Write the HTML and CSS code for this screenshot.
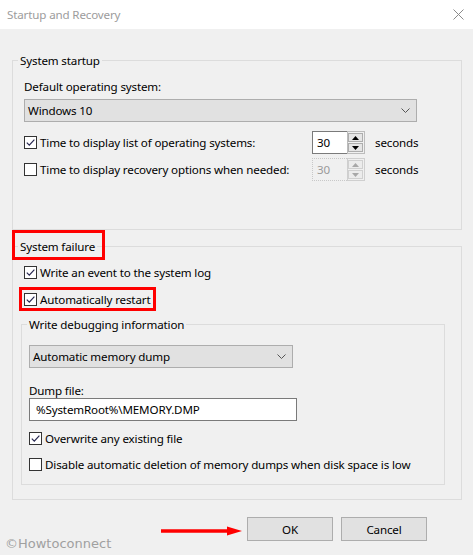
FILE: index.html
```html
<!DOCTYPE html>
<html>
<head>
<meta charset="utf-8">
<link rel="stylesheet" href="styles.css">
</head>
<body>
<div class="titlebar">
  <span class="title">Startup and Recovery</span>
  <svg class="close" viewBox="0 0 11 11" width="11" height="11"><path d="M0.5 0.5 L10.5 10.5 M10.5 0.5 L0.5 10.5" stroke="#8a8a8a" stroke-width="1" fill="none"/></svg>
</div>
<div class="main">
  <fieldset class="group g-startup">
    <legend>System startup</legend>
    <div class="startup-content">
      <div class="label">Default operating system:</div>
      <div class="combo combo-os"><span>Windows 10</span><svg class="chev" viewBox="0 0 9 5" width="9" height="5"><path d="M0.5 0.5 L4.5 4.5 L8.5 0.5" stroke="#555" fill="none"/></svg></div>
      <div class="time-row row-1">
        <div class="check"><span class="box"><svg viewBox="0 0 11 11" width="11" height="11"><path d="M1.8 5.6 L4.3 8.2 L9.4 2.6" stroke="#262650" stroke-width="1.2" fill="none"/></svg></span><span>Time to display list of operating systems:</span></div>
        <div class="spin">
          <div class="spin-text">30</div>
          <div class="spin-btns">
            <div class="sbtn"><svg viewBox="0 0 7 4" width="7" height="4"><path d="M0 4 L3.5 0 L7 4Z" fill="#000"/></svg></div>
            <div class="sbtn"><svg viewBox="0 0 7 4" width="7" height="4"><path d="M0 0 L3.5 4 L7 0Z" fill="#000"/></svg></div>
          </div>
        </div>
        <span class="unit">seconds</span>
      </div>
      <div class="time-row row-2">
        <div class="check"><span class="box"></span><span>Time to display recovery options when needed:</span></div>
        <div class="spin disabled">
          <div class="spin-text">30</div>
          <div class="spin-btns">
            <div class="sbtn"><svg viewBox="0 0 7 4" width="7" height="4"><path d="M0 4 L3.5 0 L7 4Z" fill="#a8a8a8"/></svg></div>
            <div class="sbtn"><svg viewBox="0 0 7 4" width="7" height="4"><path d="M0 0 L3.5 4 L7 0Z" fill="#a8a8a8"/></svg></div>
          </div>
        </div>
        <span class="unit">seconds</span>
      </div>
    </div>
  </fieldset>

  <fieldset class="group g-failure">
    <legend class="legend-marked">System failure<span class="mark mark-legend"></span></legend>
    <div class="failure-content">
      <div class="check check-row"><span class="box"><svg viewBox="0 0 11 11" width="11" height="11"><path d="M1.8 5.6 L4.3 8.2 L9.4 2.6" stroke="#262650" stroke-width="1.2" fill="none"/></svg></span><span>Write an event to the system log</span></div>
      <div class="check check-row row-restart"><span class="box"><svg viewBox="0 0 11 11" width="11" height="11"><path d="M1.8 5.6 L4.3 8.2 L9.4 2.6" stroke="#262650" stroke-width="1.2" fill="none"/></svg></span><span>Automatically restart</span><span class="mark mark-restart"></span></div>

      <fieldset class="group g-debug">
        <legend>Write debugging information</legend>
        <div class="debug-content">
          <div class="combo combo-dump"><span>Automatic memory dump</span><svg class="chev" viewBox="0 0 9 5" width="9" height="5"><path d="M0.5 0.5 L4.5 4.5 L8.5 0.5" stroke="#555" fill="none"/></svg></div>
          <div class="label dump-label">Dump file:</div>
          <div class="textfield">%SystemRoot%\MEMORY.DMP</div>
          <div class="check check-row debug-row row-overwrite"><span class="box"><svg viewBox="0 0 11 11" width="11" height="11"><path d="M1.8 5.6 L4.3 8.2 L9.4 2.6" stroke="#262650" stroke-width="1.2" fill="none"/></svg></span><span>Overwrite any existing file</span></div>
          <div class="check check-row debug-row row-disable"><span class="box"></span><span>Disable automatic deletion of memory dumps when disk space is low</span></div>
        </div>
      </fieldset>
    </div>
  </fieldset>

  <div class="footer">
    <svg class="arrow" viewBox="0 0 81 24" width="81" height="24"><path d="M0 14 L67 14" stroke="#f00" stroke-width="3.5" fill="none"/><path d="M66 9.5 L81 14 L66 18.5Z" fill="#f00"/></svg>
    <div class="btn">OK</div>
    <div class="btn btn-cancel">Cancel</div>
  </div>
</div>
<div class="watermark">©Howtoconnect</div>
</body>
</html>
```

FILE: styles.css
```css
* { box-sizing: border-box; }

body {
  margin: 0;
  width: 473px;
  height: 555px;
  overflow: hidden;
  position: relative;
  background: #f0f0f0;
  font-family: "Noto Sans", "Liberation Sans", sans-serif;
  font-size: 11.6px;
  letter-spacing: -0.15px;
  line-height: 15px;
  color: #000;
}

.titlebar {
  height: 29px;
  background: #fff;
  display: flex;
  align-items: center;
  justify-content: space-between;
  padding: 0 9px 0 7px;
}

.title { color: #9c9c9c; }

.close { display: block; }

.main { padding: 24px 11px 0 12px; }

.group {
  margin: 0;
  padding: 0;
  min-width: 0;
  border: 1px solid #dcdcdc;
}

.group legend {
  margin-left: 5px;
  padding: 0 2px;
  line-height: 15px;
}

.startup-content { padding: 11px 0 48px 11px; }

.combo {
  display: flex;
  align-items: center;
  justify-content: space-between;
  height: 23px;
  background: #e1e1e1;
  border: 1px solid #adadad;
  padding: 0 6px 0 3px;
}

.chev { display: block; }

.combo-os { margin-top: 5px; width: 393px; }

.time-row {
  display: flex;
  align-items: center;
  height: 23px;
}

.row-1 { margin-top: 9px; }
.row-2 { margin-top: 4px; }

.check {
  display: flex;
  align-items: center;
  gap: 3px;
}

.time-row .check { width: 288px; }

.box {
  flex: none;
  width: 13px;
  height: 13px;
  border: 1px solid #333;
  background: #fff;
  display: flex;
}

.box svg { display: block; }

.spin {
  width: 53px;
  height: 23px;
  display: flex;
}

.spin-text {
  flex: 1;
  background: #fff;
  border: 1px solid #7a7a7a;
  border-right: none;
  padding-left: 4px;
  display: flex;
  align-items: center;
}

.spin-btns {
  width: 18px;
  border: 1px solid #bcbcbc;
  background: #f0f0f0;
  padding: 1px 1px 1px 0;
  display: flex;
  flex-direction: column;
  gap: 1px;
}

.sbtn {
  flex: 1;
  background: #e5e5e5;
  border: 1px solid #adadad;
  display: flex;
  align-items: center;
  justify-content: center;
}

.spin.disabled .spin-text {
  background: #f0f0f0;
  border: 1px dotted #c8c8c8;
  border-right: none;
  color: #9a9a9a;
}

.spin.disabled .spin-btns { border-color: #cfcfcf; }
.spin.disabled .sbtn { background: #ececec; border-color: #d0d0d0; }

.unit { margin-left: 10px; }

.g-failure { margin-top: 9px; }

.legend-marked { position: relative; }

.mark {
  position: absolute;
  border: 3px solid #f00;
  pointer-events: none;
}

.mark-legend { left: -6px; top: -9px; width: 93px; height: 30px; }

.failure-content { padding: 11px 16px 14px 8px; }

.check-row { height: 15px; margin-left: 3px; }

.row-restart { margin-top: 12px; position: relative; }

.mark-restart { left: -5px; top: -5px; width: 137px; height: 24px; }

.g-debug { margin-top: 10px; }

.debug-content { padding: 13px 0 12px 7px; }

.combo-dump { width: 264px; }

.dump-label { margin-top: 15px; }

.textfield {
  width: 268px;
  height: 23px;
  background: #fff;
  border: 1px solid #7a7a7a;
  padding-left: 6px;
  display: flex;
  align-items: center;
}

.debug-row { margin-left: 0; }
.row-overwrite { margin-top: 10px; }
.row-disable { margin-top: 11px; }

.footer {
  display: flex;
  align-items: center;
  justify-content: flex-end;
  gap: 8px;
  margin-top: 17px;
  padding-right: 35px;
}

.arrow { display: block; margin-right: -3px; }

.btn {
  width: 86px;
  height: 24px;
  background: #e1e1e1;
  border: 1px solid #adadad;
  display: flex;
  align-items: center;
  justify-content: center;
}

.watermark {
  position: absolute;
  left: 5px;
  top: 536px;
  font-family: "DejaVu Sans", sans-serif;
  font-size: 13px;
  line-height: 15px;
  color: #a0a0a0;
  letter-spacing: 0;
}
```
